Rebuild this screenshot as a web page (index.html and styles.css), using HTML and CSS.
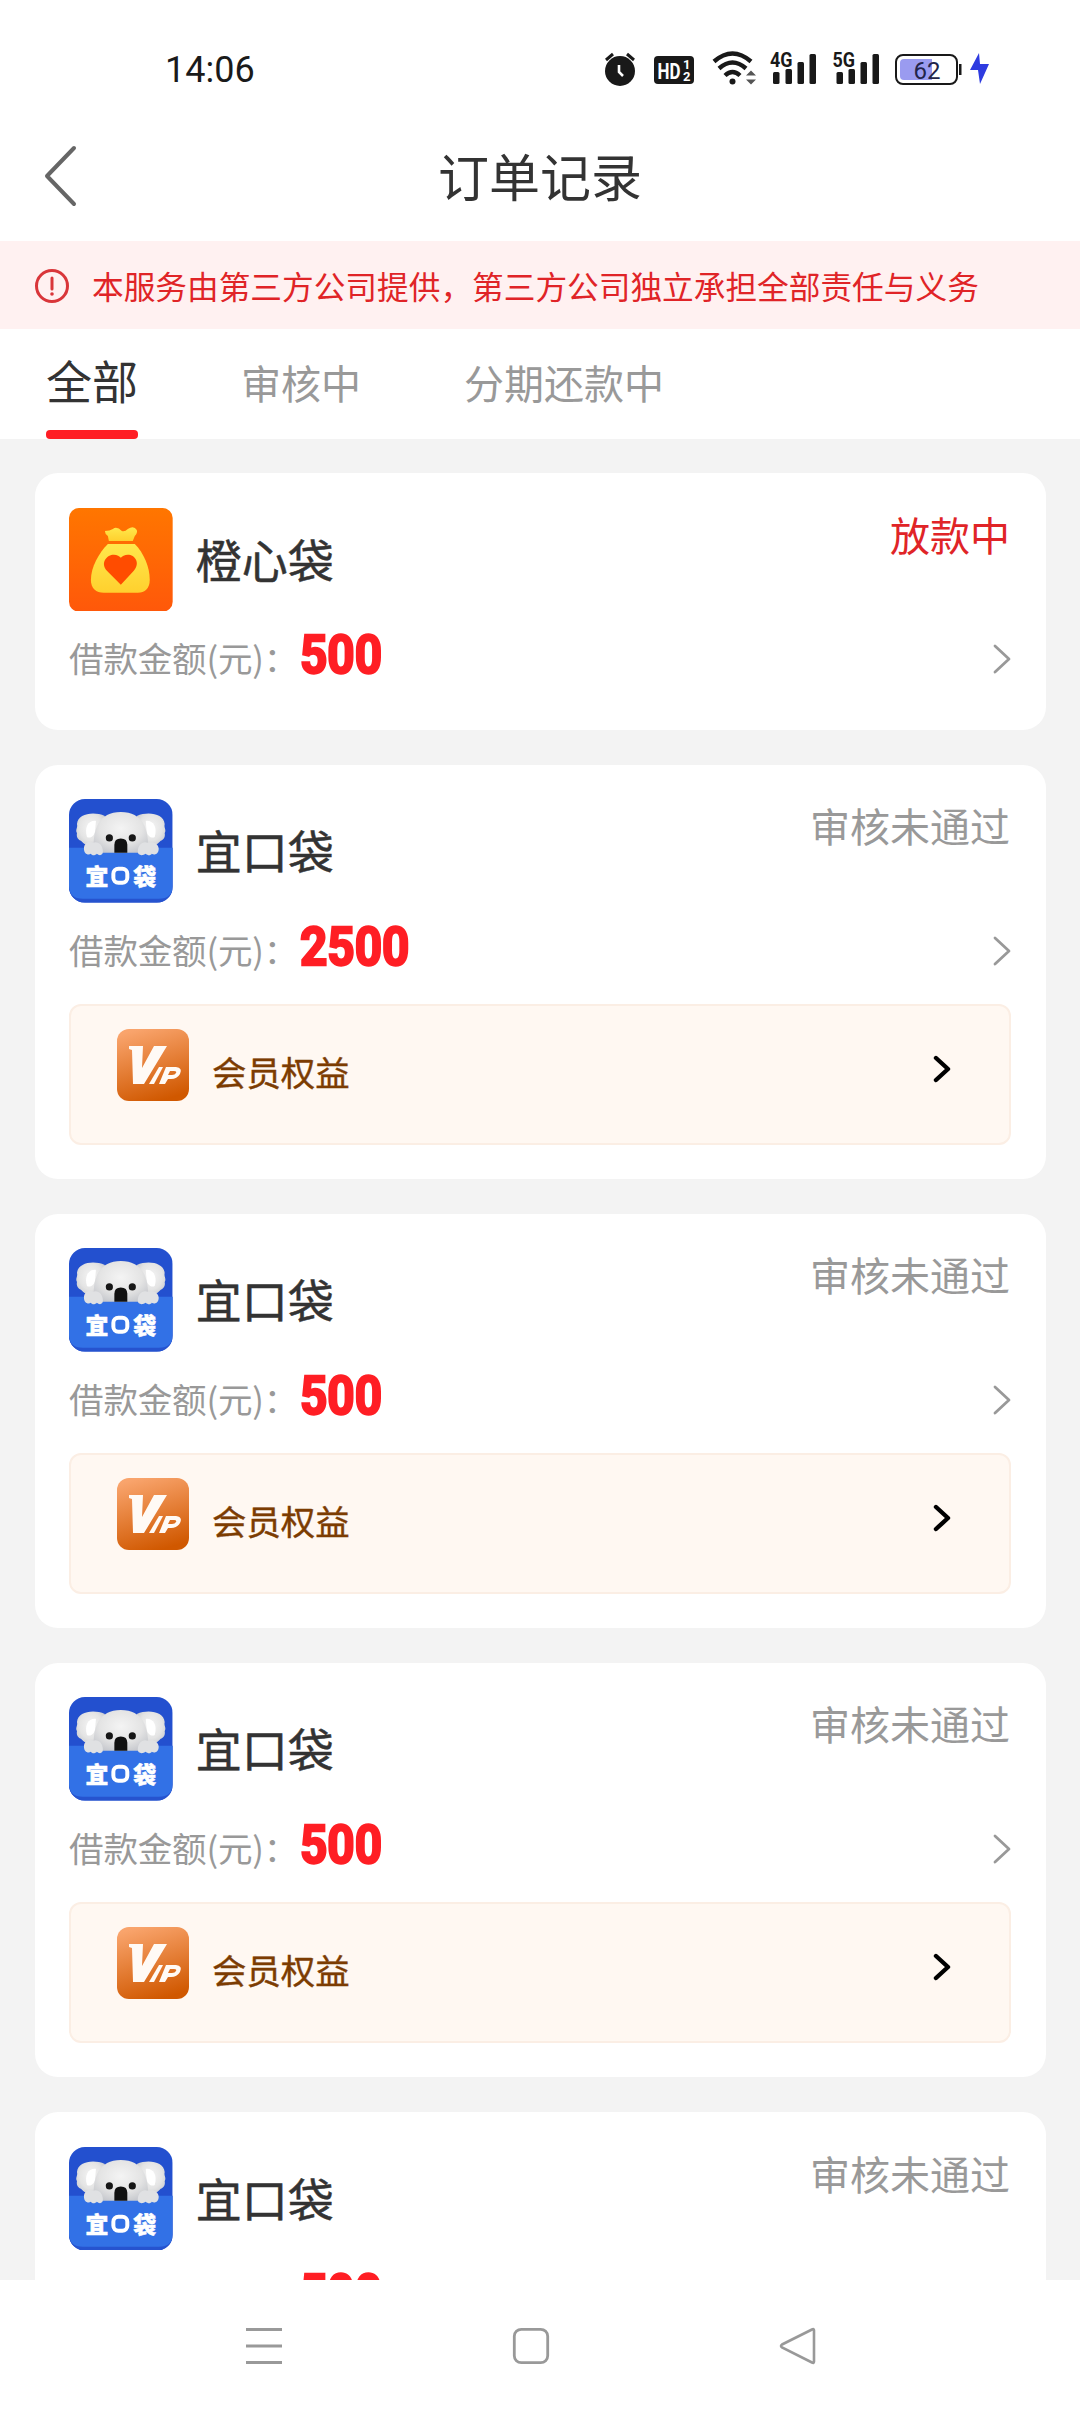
FILE: index.html
```html
<!DOCTYPE html>
<html lang="zh-CN">
<head>
    <meta charset="UTF-8">
    <meta name="viewport" content="width=device-width, initial-scale=1.0">
    <title>订单记录</title>
    <link rel="stylesheet" href="styles.css">
</head>
<body>
    <!-- shared icons -->
    <svg class="sprite" xmlns="http://www.w3.org/2000/svg">
        <defs>
            <linearGradient id="orangeBg" x1="0" y1="0" x2="0" y2="1">
                <stop offset="0" stop-color="#ff7600"/>
                <stop offset="1" stop-color="#ff580a"/>
            </linearGradient>
            <linearGradient id="bagFill" x1="0" y1="0" x2="0" y2="1">
                <stop offset="0" stop-color="#ffe84c"/>
                <stop offset="1" stop-color="#ffd02e"/>
            </linearGradient>
            <linearGradient id="vipBg" x1="0.3" y1="0" x2="0.6" y2="1">
                <stop offset="0" stop-color="#f9a46c"/>
                <stop offset="1" stop-color="#d05800"/>
            </linearGradient>
            <radialGradient id="fur" cx="0.5" cy="0.4" r="0.65">
                <stop offset="0" stop-color="#f4f4f4"/>
                <stop offset="0.6" stop-color="#e4e4e4"/>
                <stop offset="1" stop-color="#c6c8cd"/>
            </radialGradient>
            <clipPath id="logoClip"><rect width="104" height="104" rx="16"/></clipPath>
        </defs>
        <symbol id="logo-koala" viewBox="0 0 104 104">
            <g clip-path="url(#logoClip)">
                <rect width="104" height="104" fill="#2350cf"/>
                <rect y="49" width="104" height="55" fill="#2653cf"/>
                <path d="M0 49h104v38q0 13-14 13H14Q0 100 0 87z" fill="#3271e6"/>
                <path d="M36 17C24 12 9 15 8 25c1 4-2 6 0 9-1 5 2 7 4 8 5 6 14 8 21 6z" fill="url(#fur)"/>
                <path d="M68 17c12-5 27-2 28 8-1 4 2 6 0 9 1 5-2 7-4 8-5 6-14 8-21 6z" fill="url(#fur)"/>
                <path d="M27 22c-7-1-12 6-9 16 3 2 7-1 8-5z" fill="#fff"/>
                <path d="M77 22c7-1 12 6 9 16-3 2-7-1-8-5z" fill="#fff"/>
                <path d="M25 54c-2-24 5-41 27-41s29 17 27 41z" fill="url(#fur)"/>
                <path d="M15 50c0-6 5-8 9-6 5-2 10 2 10 9 0 4-4 4-6 2-2 2-5 2-6 0-3 2-7 0-7-5zM69 53c0-7 5-11 10-9 5-2 11 1 11 6 0 5-4 7-7 5-1 2-4 2-6 0-3 2-8 2-8-2z" fill="#e0e1e3"/>
                <path d="M45.500 54V46q0-6.500 6.500-6.500t6.500 6.500v8z" fill="#111"/>
                <circle cx="40.500" cy="39" r="3.600" fill="#171717"/>
                <circle cx="63.500" cy="39" r="3.600" fill="#171717"/>
            </g>
            <text class="logo-text" x="16.500" y="86">宜</text>
            <rect x="44.500" y="70" width="14" height="14" rx="5" fill="none" stroke="#fff" stroke-width="4"/>
            <text class="logo-text" x="64.500" y="86">袋</text>
        </symbol>
        <symbol id="icon-vip" viewBox="0 0 72 72">
            <rect width="72" height="72" rx="12" fill="url(#vipBg)"/>
            <path d="M12 17h14l-1 22 12-22h13L27 55H16l-1-34-3-1z" fill="#fffaf5"/>
            <path d="M42 38h4l-9 17h-5z" fill="#fffaf5"/>
            <path fill-rule="evenodd" d="M49 38h10q7 1 4 7-3 5-9 5h-3l-3 5h-6zM53 42l-2 4h4q3 0 4-2 1-2-2-2z" fill="#fffaf5"/>
        </symbol>
        <symbol id="icon-arrow" viewBox="0 0 18 30">
            <path d="M2 2l14 13L2 28" fill="none" stroke="currentColor" stroke-width="2.800" stroke-linecap="round" stroke-linejoin="round"/>
        </symbol>
        <symbol id="icon-arrow-bold" viewBox="0 0 18 28">
            <path d="M3 3l12 11L3 25" fill="none" stroke="currentColor" stroke-width="4.400" stroke-linecap="round" stroke-linejoin="round"/>
        </symbol>
    </svg>

    <div class="page">
        <div class="statusbar">
            <span class="clock">14:06</span>
            <svg class="status-icons" viewBox="0 0 400 40">
                <!-- alarm -->
                <g fill="#191919">
                    <circle cx="20" cy="21" r="15"/>
                    <path d="M6 10l7-6M34 10l-7-6" stroke="#191919" stroke-width="3"/>
                    <path d="M19 15v7l4 4" fill="none" stroke="#fff" stroke-width="2.600"/>
                </g>
                <!-- hd -->
                <rect x="54" y="6" width="40" height="28" rx="4" fill="#191919"/>
                <text class="hd" x="57.500" y="28.500" textLength="23" lengthAdjust="spacingAndGlyphs">HD</text>
                <text class="hd-num" x="83" y="19">1</text>
                <text class="hd-num" x="83" y="31">2</text>
                <!-- wifi -->
                <g fill="none" stroke="#191919" stroke-width="4.400">
                    <path d="M114 11.500q18.500-16 37 0"/>
                    <path d="M119 18.500q13.500-12 27 0"/>
                    <path d="M125 25.500q7.500-7 15 0"/>
                </g>
                <circle cx="132.500" cy="31.500" r="3" fill="#191919"/>
                <path d="M146 25.500l5-5 5 5zM146 29.500h10l-5 5z" fill="#555"/>
                <!-- signal 1 -->
                <text class="net" x="170" y="17" textLength="22.500" lengthAdjust="spacingAndGlyphs">4G</text>
                <g fill="#191919">
                    <rect x="173" y="22" width="6.500" height="12" rx="1.500"/>
                    <rect x="185.500" y="19" width="6.500" height="15" rx="1.500"/>
                    <rect x="197.500" y="12" width="6.500" height="22" rx="1.500"/>
                    <rect x="209.500" y="4" width="6.500" height="30" rx="1.500"/>
                </g>
                <!-- signal 2 -->
                <text class="net" x="232.500" y="17" textLength="22.500" lengthAdjust="spacingAndGlyphs">5G</text>
                <g fill="#191919">
                    <rect x="236.500" y="22" width="6.500" height="12" rx="1.500"/>
                    <rect x="248.500" y="19" width="6.500" height="15" rx="1.500"/>
                    <rect x="260.500" y="12" width="6.500" height="22" rx="1.500"/>
                    <rect x="272.500" y="4" width="6.500" height="30" rx="1.500"/>
                </g>
                <!-- battery -->
                <rect x="296" y="5" width="61" height="29" rx="7" fill="#fff" stroke="#191919" stroke-width="2"/>
                <path d="M304 9h28v21h-28q-4 0-4-4V13q0-4 4-4z" fill="#9a9bf0"/>
                <rect x="359" y="14" width="2.500" height="11" fill="#191919"/>
                <text class="battery-num" x="327" y="28.500" text-anchor="middle">62</text>
                <path d="M379 3l-9 17h8l2 14 9-20h-9z" fill="#2e3be0"/>
            </svg>
        </div>

        <div class="navbar">
            <svg class="back" viewBox="0 0 36 64">
                <path d="M32 4L5 32l27 28" fill="none" stroke="#666" stroke-width="4" stroke-linecap="round" stroke-linejoin="round"/>
            </svg>
            <h1>订单记录</h1>
        </div>

        <div class="notice">
            <svg class="notice-icon" viewBox="0 0 36 36">
                <circle cx="18" cy="18" r="15.500" fill="none" stroke="#d9363a" stroke-width="3"/>
                <path d="M18 10v11" stroke="#d9363a" stroke-width="3" stroke-linecap="round"/>
                <circle cx="18" cy="26" r="1.800" fill="#d9363a"/>
            </svg>
            <span>本服务由第三方公司提供，第三方公司独立承担全部责任与义务</span>
        </div>

        <div class="tabs">
            <div class="tab active">全部</div>
            <div class="tab">审核中</div>
            <div class="tab">分期还款中</div>
        </div>

        <div class="list">
            <div class="card">
                <div class="card-head">
                    <svg class="logo" viewBox="0 0 104 104">
                        <rect width="104" height="104" rx="10" fill="url(#orangeBg)"/>
                        <path d="M36 23q5 0 8-2 4-3 9 2 3 1 6-2 6-4 9 1 1 3-2 6l-2 5H40l-1-5q-3-2-3-5z" fill="url(#bagFill)"/>
                        <path d="M39 36h27c9 9 15 23 15 36 0 9-5 13-12 13H35c-8 0-13-4-13-13 0-13 8-27 17-36z" fill="url(#bagFill)"/>
                        <path d="M52 77L38 63c-7-8 0-16 7-16 3 0 6 2 7 3 1-1 4-3 7-3 7 0 13 8 6 16z" fill="#ff4c00"/>
                    </svg>
                    <div class="name">橙心袋</div>
                    <div class="status lending">放款中</div>
                </div>
                <div class="card-row">
                    <span class="label">借款金额(元)：</span>
                    <span class="amount">500</span>
                    <svg class="arrow"><use href="#icon-arrow"/></svg>
                </div>
            </div>

            <div class="card">
                <div class="card-head">
                    <svg class="logo"><use href="#logo-koala"/></svg>
                    <div class="name">宜口袋</div>
                    <div class="status">审核未通过</div>
                </div>
                <div class="card-row">
                    <span class="label">借款金额(元)：</span>
                    <span class="amount">2500</span>
                    <svg class="arrow"><use href="#icon-arrow"/></svg>
                </div>
                <div class="vip">
                    <svg class="vip-icon"><use href="#icon-vip"/></svg>
                    <span class="vip-text">会员权益</span>
                    <svg class="vip-arrow"><use href="#icon-arrow-bold"/></svg>
                </div>
            </div>

            <div class="card">
                <div class="card-head">
                    <svg class="logo"><use href="#logo-koala"/></svg>
                    <div class="name">宜口袋</div>
                    <div class="status">审核未通过</div>
                </div>
                <div class="card-row">
                    <span class="label">借款金额(元)：</span>
                    <span class="amount">500</span>
                    <svg class="arrow"><use href="#icon-arrow"/></svg>
                </div>
                <div class="vip">
                    <svg class="vip-icon"><use href="#icon-vip"/></svg>
                    <span class="vip-text">会员权益</span>
                    <svg class="vip-arrow"><use href="#icon-arrow-bold"/></svg>
                </div>
            </div>

            <div class="card">
                <div class="card-head">
                    <svg class="logo"><use href="#logo-koala"/></svg>
                    <div class="name">宜口袋</div>
                    <div class="status">审核未通过</div>
                </div>
                <div class="card-row">
                    <span class="label">借款金额(元)：</span>
                    <span class="amount">500</span>
                    <svg class="arrow"><use href="#icon-arrow"/></svg>
                </div>
                <div class="vip">
                    <svg class="vip-icon"><use href="#icon-vip"/></svg>
                    <span class="vip-text">会员权益</span>
                    <svg class="vip-arrow"><use href="#icon-arrow-bold"/></svg>
                </div>
            </div>

            <div class="card">
                <div class="card-head">
                    <svg class="logo"><use href="#logo-koala"/></svg>
                    <div class="name">宜口袋</div>
                    <div class="status">审核未通过</div>
                </div>
                <div class="card-row">
                    <span class="label"></span>
                    <span class="amount">500</span>
                </div>
            </div>
        </div>

        <div class="sysnav">
            <svg viewBox="0 0 40 40"><path d="M2 3.500h36M2 20h36M2 36.500h36" stroke="#999" stroke-width="2.800"/></svg>
            <svg viewBox="0 0 40 40"><rect x="3.300" y="3.300" width="33.400" height="33.400" rx="7" fill="none" stroke="#999" stroke-width="2.800"/></svg>
            <svg viewBox="0 0 40 40"><path d="M4 18.500L34 3.500q2-1 2 1v31q0 2-2 1L4 21.500q-2-1.500 0-3z" fill="none" stroke="#999" stroke-width="2.600"/></svg>
        </div>
    </div>
</body>
</html>
```
FILE: styles.css
```css
* {
    box-sizing: border-box;
}
body {
    margin: 0;
    background: #fff;
    color: #333;
    font-family: "Noto Sans CJK SC", sans-serif;
}
.sprite {
    display: block;
    width: 0;
    height: 0;
}
.page {
    width: 1080px;
    height: 2412px;
    display: flex;
    flex-direction: column;
    overflow: hidden;
}

/* status bar */
.statusbar {
    height: 114px;
    padding: 26px 80px 0 165px;
    display: flex;
    align-items: center;
    justify-content: space-between;
    flex: none;
}
.clock {
    font-family: Roboto, sans-serif;
    font-size: 36px;
    color: #1a1a1a;
}
.status-icons {
    width: 400px;
    height: 40px;
    overflow: visible;
}
.hd,
.hd-num,
.net {
    font-family: Roboto, sans-serif;
    font-weight: 700;
}
.hd {
    font-size: 22px;
    fill: #fff;
}
.hd-num {
    font-size: 13px;
    fill: #fff;
}
.net {
    font-size: 21px;
    fill: #191919;
}
.battery-num {
    font-family: Roboto, sans-serif;
    font-size: 24px;
    fill: #22244a;
}

/* title */
.navbar {
    height: 127px;
    padding: 0 42px 4px;
    display: grid;
    grid-template-columns: 60px 1fr 60px;
    align-items: center;
    flex: none;
}
.back {
    width: 36px;
    height: 64px;
}
h1 {
    margin: 0 0 2px;
    text-align: center;
    font-size: 51px;
    font-weight: 400;
    line-height: 60px;
}

/* notice */
.notice {
    height: 88px;
    padding-left: 34px;
    display: flex;
    align-items: center;
    gap: 22px;
    background: #fff1f1;
    color: #e02427;
    font-size: 31.680px;
    flex: none;
    white-space: nowrap;
}
.notice-icon {
    width: 36px;
    height: 36px;
    margin-top: 2px;
}

/* tabs */
.tabs {
    height: 110px;
    padding-left: 46px;
    display: flex;
    gap: 103px;
    flex: none;
}
.tab {
    height: 110px;
    line-height: 106px;
    font-size: 40px;
    color: #999;
}
.tab.active {
    font-size: 46px;
    line-height: 101px;
    color: #333;
}
.tab.active::after {
    content: "";
    display: block;
    height: 9px;
    border-radius: 4px;
    background: #ff1e24;
}

/* orders */
.list {
    flex: 1;
    min-height: 0;
    overflow: hidden;
    padding: 34px 34.500px 0;
    display: flex;
    flex-direction: column;
    gap: 34.560px;
    background: #f3f3f3;
}
.card {
    flex: none;
    background: #fff;
    border-radius: 23px;
    padding: 34.800px 34.560px 34.560px;
}
.card-head {
    height: 103.680px;
    display: flex;
}
.logo {
    width: 103.680px;
    height: 103.680px;
    flex: none;
}
.logo-text {
    font-size: 23px;
    font-weight: 900;
    fill: #fff;
    stroke: #fff;
    stroke-width: 0.500px;
}
.name {
    margin-left: 23px;
    font-size: 46px;
    line-height: 100px;
    -webkit-text-stroke: 0.500px #333;
}
.status {
    margin-left: auto;
    margin-right: 1px;
    font-size: 40px;
    line-height: 52px;
    color: #999;
}
.status.lending {
    color: #e02427;
}
.card-row {
    height: 84px;
    display: flex;
    align-items: center;
}
.label {
    width: 231px;
    font-size: 34.560px;
    line-height: 50px;
    padding-top: 8px;
    color: #999;
    letter-spacing: -0.200px;
    white-space: nowrap;
}
.amount {
    margin-top: 3px;
    font-family: Roboto, sans-serif;
    font-size: 53px;
    font-weight: 700;
    line-height: 60px;
    color: #ff1e24;
    -webkit-text-stroke: 2.400px #ff1e24;
    transform: scaleX(0.9);
    transform-origin: left;
}
.arrow {
    width: 18px;
    height: 30px;
    margin: 12px 0 0 auto;
    color: #999;
}

/* member benefits */
.vip {
    height: 140.500px;
    margin-top: 17px;
    padding: 23px 58px 0 46px;
    display: flex;
    background: #fff8f2;
    border: 2px solid #fbeee4;
    border-radius: 12px;
}
.vip-icon {
    width: 72px;
    height: 72px;
}
.vip-text {
    margin-left: 23px;
    font-size: 34.400px;
    line-height: 85px;
    color: #7c3c02;
    -webkit-text-stroke: 0.400px #7c3c02;
}
.vip-arrow {
    width: 18px;
    height: 28px;
    margin: 26px 0 0 auto;
    color: #000;
}

/* system navigation */
.sysnav {
    height: 132px;
    padding: 0 262px 0 244px;
    display: flex;
    align-items: center;
    justify-content: space-between;
    background: #fff;
    flex: none;
}
.sysnav svg {
    width: 40px;
    height: 40px;
}
```
